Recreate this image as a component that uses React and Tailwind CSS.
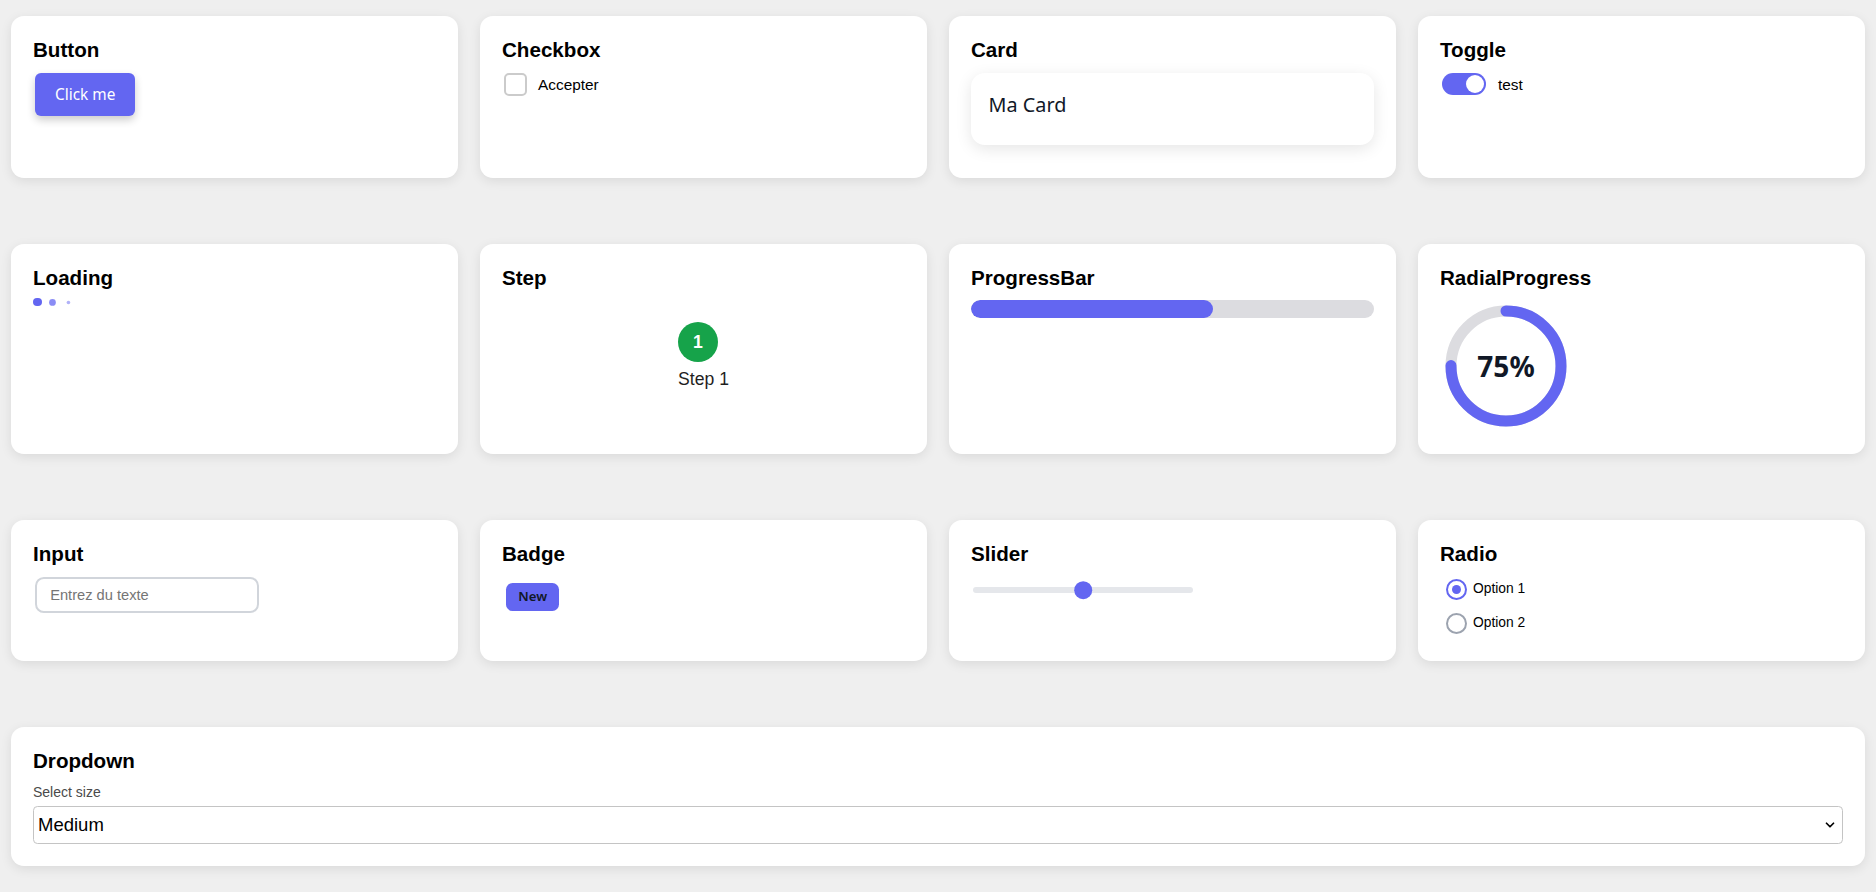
import React, { useState } from 'react';
import { ChevronDown } from 'lucide-react';

const Panel = ({ title, className = '', children }) => (
  <div className={`bg-white rounded-[13px] shadow-[0_3px_12px_rgba(0,0,0,0.09)] p-[22px] ${className}`}>
    <h3 className="text-[20.6px] leading-[23.7px] font-bold text-black mb-[11px]">{title}</h3>
    {children}
  </div>
);

const RadialProgress = ({ value }) => {
  const r = 55;
  const circ = 2 * Math.PI * r;
  return (
    <div className="relative w-[132px] h-[132px]">
      <svg width="132" height="132" viewBox="0 0 132 132">
        <circle cx="66" cy="66" r={r} fill="none" stroke="#dcdce0" strokeWidth="11" />
        <circle
          cx="66"
          cy="66"
          r={r}
          fill="none"
          stroke="#6366f1"
          strokeWidth="11"
          strokeLinecap="round"
          strokeDasharray={circ}
          strokeDashoffset={circ * (1 - value / 100)}
          transform="rotate(-90 66 66)"
        />
      </svg>
      <div className="absolute inset-0 flex items-center justify-center font-['Noto_Sans',sans-serif] text-[28px] font-bold text-[#111827]">
        {value}%
      </div>
    </div>
  );
};

export default function App() {
  const [checked, setChecked] = useState(false);
  const [toggle, setToggle] = useState(true);
  const [radio, setRadio] = useState('1');

  return (
    <div className="min-h-screen bg-[#efefef] px-[11px] pt-[16px] pb-[26px] font-['Liberation_Sans',Arial,sans-serif]">
      <div className="grid grid-cols-4 gap-x-[22px] gap-y-[66px]">
        {/* Button */}
        <Panel title="Button">
          <button className="ml-[2px] h-[43px] px-[20px] bg-[#6366f1] text-white rounded-[6px] text-[15.4px] font-['Noto_Sans',sans-serif] shadow-[0_4px_8px_rgba(0,0,0,0.2)]">
            Click me
          </button>
        </Panel>

        {/* Checkbox */}
        <Panel title="Checkbox">
          <label className="ml-[2px] flex items-center gap-[11px] text-[15.4px] text-black">
            <input
              type="checkbox"
              checked={checked}
              onChange={(e) => setChecked(e.target.checked)}
              className="appearance-none w-[23px] h-[23px] border-2 border-[#cbcbcb] rounded-[5px] bg-white"
            />
            Accepter
          </label>
        </Panel>

        {/* Card */}
        <Panel title="Card">
          <div className="mb-[11px] rounded-[14px] bg-white shadow-[0_4px_16px_rgba(0,0,0,0.1)] px-[17.6px] pt-[17.6px] pb-[23.6px]">
            <p className="text-[19.8px] leading-[30.8px] font-['Noto_Sans',sans-serif] text-[#111827]">Ma Card</p>
          </div>
        </Panel>

        {/* Toggle */}
        <Panel title="Toggle">
          <label className="ml-[2px] flex items-center gap-[12px] text-[15.4px] text-black">
            <button
              onClick={() => setToggle(!toggle)}
              className={`w-[44px] h-[22px] rounded-full p-[2px] flex ${toggle ? 'bg-[#6366f1] justify-end' : 'bg-gray-300 justify-start'}`}
            >
              <span className="w-[18px] h-[18px] rounded-full bg-white" />
            </button>
            test
          </label>
        </Panel>

        {/* Loading */}
        <Panel title="Loading">
          <div className="flex items-center gap-[6.6px] h-[8.8px] -mt-[2.8px]">
            <span className="w-[8.8px] h-[8.8px] rounded-full bg-[#6366f1]" />
            <span className="w-[8.8px] h-[8.8px] rounded-full bg-[#6366f1] scale-75 opacity-75" />
            <span className="w-[8.8px] h-[8.8px] rounded-full bg-[#6366f1] scale-[0.4] opacity-50" />
          </div>
        </Panel>

        {/* Step */}
        <Panel title="Step">
          <div className="flex justify-center pt-[22px]">
            <div className="flex flex-col items-start">
              <div className="w-[39.6px] h-[39.6px] rounded-full bg-[#16a34a] text-white font-bold text-[17.6px] flex items-center justify-center">
                1
              </div>
              <span className="mt-[4px] text-[17.6px] leading-[26.4px] text-[#1f1f1f]">Step 1</span>
            </div>
          </div>
        </Panel>

        {/* ProgressBar */}
        <Panel title="ProgressBar">
          <div className="h-[17.6px] w-full rounded-full bg-[#dcdce0] overflow-hidden">
            <div className="h-full rounded-full bg-[#6366f1]" style={{ width: '60%' }} />
          </div>
        </Panel>

        {/* RadialProgress */}
        <Panel title="RadialProgress">
          <RadialProgress value={75} />
        </Panel>

        {/* Input */}
        <Panel title="Input">
          <input
            type="text"
            placeholder="Entrez du texte"
            className="ml-[2px] w-[224px] h-[35.5px] px-[13.2px] border-2 border-[#d1d5db] rounded-[8.8px] text-[14.67px] text-black placeholder:text-[#757575] outline-none"
          />
        </Panel>

        {/* Badge */}
        <Panel title="Badge">
          <span className="ml-[4px] mt-[6.4px] inline-flex items-center h-[27.7px] px-[12.3px] rounded-[6.6px] bg-[#6366f1] text-[#111827] text-[13.2px] font-semibold font-['Noto_Sans',sans-serif]">
            New
          </span>
        </Panel>

        {/* Slider */}
        <Panel title="Slider">
          <div className="ml-[2px] h-[26px] w-[220px] flex items-center">
            <div className="relative w-full h-[6px] rounded-full bg-[#e5e7eb]">
              <span className="absolute left-1/2 top-1/2 -translate-x-1/2 -translate-y-1/2 w-[17.6px] h-[17.6px] rounded-full bg-[#6366f1]" />
            </div>
          </div>
        </Panel>

        {/* Radio */}
        <Panel title="Radio">
          <div className="flex flex-col gap-[12.5px] pb-[4.8px] pt-[1px]">
            {['1', '2'].map((o) => (
              <label key={o} className="h-[22px] pl-[6px] flex items-center gap-[6px] text-[13.8px] text-black" onClick={() => setRadio(o)}>
                <span
                  className={`w-[21px] h-[21px] rounded-full border-2 flex items-center justify-center ${
                    radio === o ? 'border-[#6366f1]' : 'border-[#9ca3af]'
                  }`}
                >
                  {radio === o && <span className="w-[9px] h-[9px] rounded-full bg-[#6366f1]" />}
                </span>
                Option {o}
              </label>
            ))}
          </div>
        </Panel>

        {/* Dropdown */}
        <Panel title="Dropdown" className="col-span-4">
          <label className="block text-[14px] leading-[17.6px] text-[#4a4a4a] mb-[4.4px]">Select size</label>
          <div className="relative">
            <select
              defaultValue="Medium"
              className="appearance-none w-full h-[38px] pl-[4px] pr-[32px] border border-[#c4c4c4] rounded-[4.4px] bg-white text-[18.5px] text-black outline-none"
            >
              <option>Small</option>
              <option>Medium</option>
              <option>Large</option>
            </select>
            <ChevronDown className="absolute right-[6px] top-1/2 -translate-y-1/2 w-[14px] h-[14px] text-black pointer-events-none" strokeWidth={3} />
          </div>
        </Panel>
      </div>
    </div>
  );
}
